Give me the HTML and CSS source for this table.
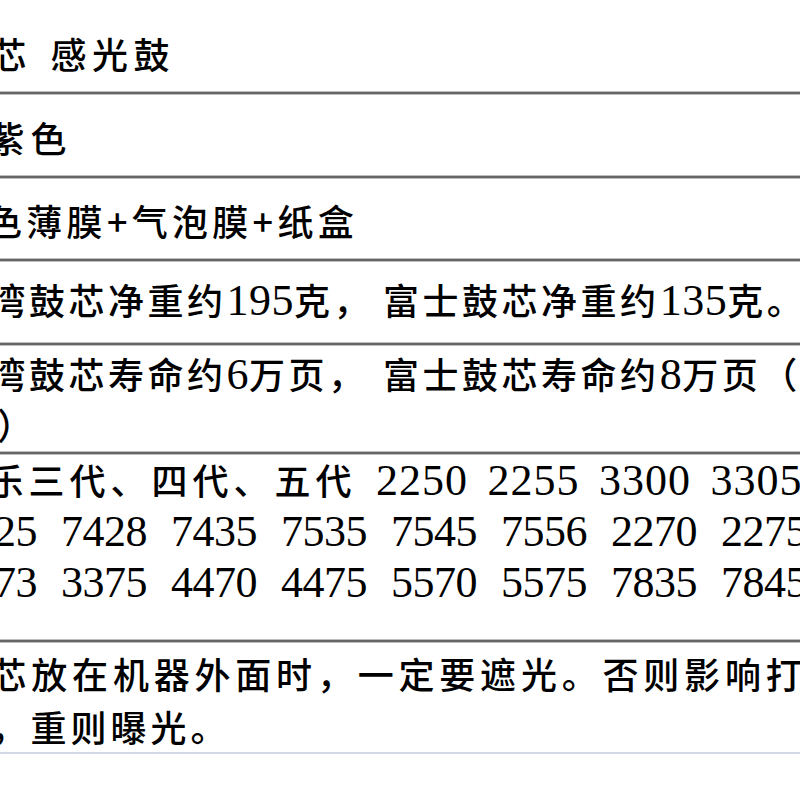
FILE: index.html
```html
<!DOCTYPE html>
<html lang="zh-CN">
<head>
<meta charset="utf-8">
<title>鼓芯 感光鼓</title>
<link rel="stylesheet" href="styles.css">
</head>
<body>
<div class="sheet">
  <div class="row r1">
    <div class="line l1">芯 感光鼓</div>
  </div>
  <div class="row r2">
    <div class="line l2">紫色</div>
  </div>
  <div class="row r3">
    <div class="line l3">色薄膜+气泡膜+纸盒</div>
  </div>
  <div class="row r4">
    <div class="line l4">湾鼓芯净重约<span class="d">195</span>克， 富士鼓芯净重约<span class="d">135</span>克。</div>
  </div>
  <div class="row r5">
    <div class="line l5">湾鼓芯寿命约<span class="d">6</span>万页， 富士鼓芯寿命约<span class="d">8</span>万页（</div>
    <div class="line l5b">）</div>
  </div>
  <div class="row r6">
    <div class="line l6a">乐三代、四代、五代<span class="d d6a"> 2250 2255 3300 3305</span></div>
    <div class="line l6b"><span class="d d6b">25 7428 7435 7535 7545 7556 2270 2275</span></div>
    <div class="line l6b"><span class="d d6b">73 3375 4470 4475 5570 5575 7835 7845</span></div>
  </div>
  <div class="row r7">
    <div class="line l7a">芯放在机器外面时，一定要遮光。否则影响打</div>
    <div class="line l7b">，重则曝光。</div>
  </div>
</div>
</body>
</html>
```

FILE: styles.css
```css
html, body {
  margin: 0;
  padding: 0;
  background: #ffffff;
}

body {
  width: 800px;
  height: 800px;
  overflow: hidden;
}

.sheet {
  width: 800px;
  display: flex;
  flex-direction: column;
  font-family: "Noto Sans CJK SC", "Liberation Serif", sans-serif;
  font-size: 36px;
  font-weight: 500;
  color: #000000;
}

.row {
  box-sizing: border-box;
  overflow: hidden;
  border-bottom: 2px solid #666666;
  box-shadow: 0 1px 0 #bdbdbd, inset 0 -1px 0 #bdbdbd;
}

.line {
  white-space: nowrap;
  line-height: 51px;
  height: 51px;
}

.d {
  font-family: "Liberation Serif", serif;
  font-size: 44px;
  font-weight: 400;
  line-height: 1;
  letter-spacing: 0.5px;
}

.r1 { height: 94px; padding-top: 27.5px; }
.r2 { height: 84px; padding-top: 17.5px; }
.r3 { height: 83px; padding-top: 16.5px; }
.r4 { height: 84px; padding-top: 12.5px; }
.r5 { height: 109px; padding-top: 2.5px; }
.r6 { height: 188px; padding-top: 0; }
.r7 {
  height: 112px;
  padding-top: 4.5px;
  border-bottom: 2px solid #d3d8e6;
  box-shadow: none;
}

.l1 { margin-left: -9.5px; letter-spacing: 5.5px; word-spacing: 5px; }
.l2 { margin-left: -11.5px; letter-spacing: 6px; }
.l3 { margin-left: -14px; letter-spacing: 4.3px; }
.l4 { margin-left: -10.5px; letter-spacing: 3.5px; word-spacing: -1.5px; }
.l5 { margin-left: -10.5px; letter-spacing: 3.5px; word-spacing: 4px; }
.l4 .d, .l5 .d { letter-spacing: 0.5px; }
.l5b { margin-left: -3px; }

.l6a { margin-left: -12.5px; letter-spacing: 5px; }
.d6a { letter-spacing: 1px; word-spacing: 7.5px; }
.l6b { margin-left: -6px; }
.d6b { letter-spacing: -0.5px; word-spacing: 13.5px; }

.r7 .line { line-height: 53px; height: 53px; }
.l7a { margin-left: -9.5px; letter-spacing: 4.8px; }
.l7b { margin-left: -9.5px; letter-spacing: 4px; }
```
